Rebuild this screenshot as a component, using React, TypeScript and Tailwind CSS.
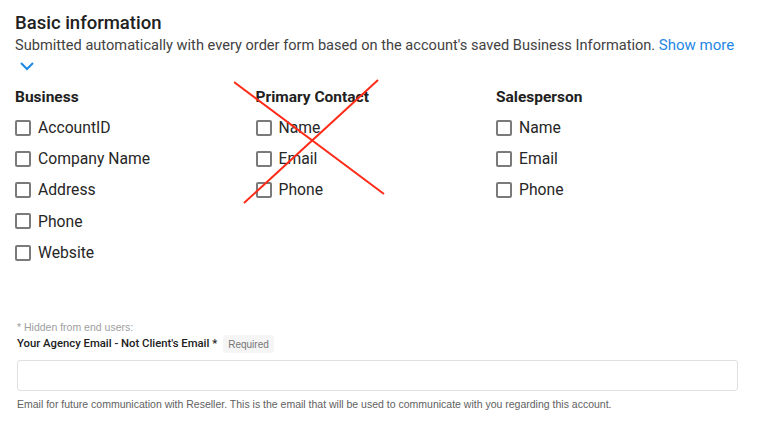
const columns = [
  { title: "Business", items: ["AccountID", "Company Name", "Address", "Phone", "Website"] },
  { title: "Primary Contact", items: ["Name", "Email", "Phone"], crossed: true },
  { title: "Salesperson", items: ["Name", "Email", "Phone"] },
];

function Checkbox({ label }: { label: string }) {
  return (
    <label className="flex items-center h-[31.25px] gap-[7px]">
      <span className="w-4 h-4 border-2 border-[#7a7a7a] rounded-[2px] shrink-0" />
      <span className="text-[15.7px] text-[#262626]">{label}</span>
    </label>
  );
}

export default function App() {
  return (
    <div className="w-[769px] h-[437px] bg-white overflow-hidden" style={{ fontFamily: "Roboto, sans-serif" }}>
      {/* Header */}
      <div className="pl-[15px] pt-[11px]">
        <h2 className="text-[18.5px] leading-[24px] font-medium text-[#212121]">Basic information</h2>
        <p className="text-[14.6px] leading-[20px] text-[#424242]">
          Submitted automatically with every order form based on the account's saved Business Information.{" "}
          <span className="text-[#1e88e5] text-[15px]">Show more</span>
        </p>
        <svg width="16" height="14" viewBox="0 0 16 14" className="ml-[4px] mt-[4px]">
          <path d="M2 4l6 6 6-6" fill="none" stroke="#1e88e5" strokeWidth="2" />
        </svg>
      </div>

      {/* Columns */}
      <div className="flex pl-[15px] pt-[14px]">
        {columns.map((col) => (
          <div key={col.title} className="w-[240.5px] relative">
            <h3 className="text-[15.5px] leading-[20px] font-bold text-[#212121] mb-[5px]">{col.title}</h3>
            {col.items.map((it) => (
              <Checkbox key={it} label={it} />
            ))}
            {col.crossed && (
              <svg className="absolute left-[-22px] top-[-8px] pointer-events-none" width="160" height="130" viewBox="0 0 160 130">
                <line x1="0" y1="3" x2="150" y2="115" stroke="#ff2a17" strokeWidth="2" />
                <line x1="144" y1="1" x2="10" y2="124" stroke="#ff2a17" strokeWidth="2" />
              </svg>
            )}
          </div>
        ))}
      </div>

      {/* Agency email */}
      <div className="pl-[17px] pt-[52px] w-[738px]" style={{ fontFamily: '"Liberation Sans", Arial, sans-serif' }}>
        <p className="text-[10.5px] leading-[14px] text-[#9e9e9e]">* Hidden from end users:</p>
        <div className="flex items-center gap-[6px] mt-[1px]">
          <span className="text-[11.3px] font-medium text-[#212121]" style={{ fontFamily: "Roboto, sans-serif" }}>
            Your Agency Email - Not Client's Email *
          </span>
          <span className="bg-[#f5f5f5] text-[#757575] text-[10px] rounded-[4px] px-[5px] h-[18px] flex items-center">Required</span>
        </div>
        <div className="mt-[7px] h-[31px] border border-[#e0e0e0] rounded-[3px]" />
        <p className="mt-[6px] text-[10.5px] leading-[14px] text-[#616161]">
          Email for future communication with Reseller. This is the email that will be used to communicate with you regarding this account.
        </p>
      </div>
    </div>
  );
}
